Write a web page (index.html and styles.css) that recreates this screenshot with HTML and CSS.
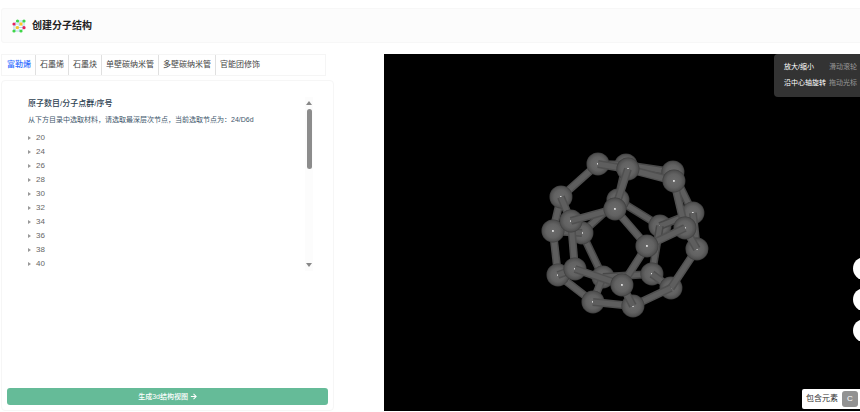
FILE: index.html
```html
<!DOCTYPE html>
<html lang="zh-CN">
<head>
<meta charset="utf-8">
<title>创建分子结构</title>
<link rel="stylesheet" href="styles.css">
</head>
<body>
<header class="header">
  <svg class="logo" viewBox="0 0 14 14" aria-hidden="true">
    <path d="M5 2H12M5 2L2 5L5 8.500L9 5L12 2V8.500L9 5H2M5 2L9 5M2 5V12H9L12 8.500H5L2 12M5 8.500L9 12" fill="none" stroke="#9ccbe8" stroke-width=".8"/>
    <g fill="#3fd648"><circle cx="5.500" cy="2" r="1.600"/><circle cx="12" cy="2" r="1.600"/><circle cx="2" cy="12" r="1.600"/><circle cx="9" cy="12" r="1.600"/></g>
    <g fill="#e6215c"><circle cx="2" cy="5" r="1.600"/><circle cx="12" cy="8.700" r="1.600"/></g>
    <g fill="#f8c82c"><circle cx="9" cy="5" r="1.700"/><circle cx="5.300" cy="8.600" r="1.700"/></g>
  </svg>
  <h1 class="title">创建分子结构</h1>
</header>
<main class="main">
  <section class="side">
    <nav class="tabs">
      <button class="tab tab-active" type="button">富勒烯</button>
      <button class="tab" type="button">石墨烯</button>
      <button class="tab" type="button">石墨炔</button>
      <button class="tab" type="button">单壁碳纳米管</button>
      <button class="tab" type="button">多壁碳纳米管</button>
      <button class="tab" type="button">官能团修饰</button>
    </nav>
    <div class="card">
      <div class="picker">
        <div class="picker-body">
          <h2 class="subtitle">原子数目/分子点群/序号</h2>
          <p class="hint">从下方目录中选取材料，请选取最深层次节点，当前选取节点为：24/D6d</p>
          <ul class="tree">
            <li>20</li><li>24</li><li>26</li><li>28</li><li>30</li>
            <li>32</li><li>34</li><li>36</li><li>38</li><li>40</li>
          </ul>
        </div>
        <div class="scrollbar" aria-hidden="true">
          <span class="arrow arrow-up"></span>
          <span class="thumb"></span>
          <span class="arrow arrow-down"></span>
        </div>
      </div>
      <button class="generate" type="button">生成3d结构视图
        <svg class="go" viewBox="0 0 8 8" aria-hidden="true"><path d="M1 4H7M4 1L7 4L4 7" fill="none" stroke="currentColor" stroke-width="1.200"/></svg>
      </button>
    </div>
  </section>
  <section class="viewer">
    <svg class="molecule" viewBox="384 54 476 357" role="img" aria-label="C24 分子模型">
      <defs>
        <radialGradient id="ball">
          <stop offset="0" stop-color="#6b6b6b"/>
          <stop offset=".6" stop-color="#626262"/>
          <stop offset=".88" stop-color="#515151"/>
          <stop offset="1" stop-color="#3c3c3c"/>
        </radialGradient>
        <g id="atom"><circle r="11.500" fill="url(#ball)"/><circle r=".9" fill="#fff"/></g>
      </defs>
      <g id="scene"></g>
    </svg>
    <dl class="help">
      <dt>放大/缩小</dt><dd>滑动滚轮</dd>
      <dt>沿中心轴旋转</dt><dd>拖动光标</dd>
    </dl>
    <div class="tools">
      <button class="tool" type="button" aria-label="放大"></button>
      <button class="tool" type="button" aria-label="缩小"></button>
      <button class="tool" type="button" aria-label="重置"></button>
    </div>
    <div class="elements">包含元素<span class="element">C</span></div>
  </section>
</main>
<script src="molecule.js"></script>
</body>
</html>
```
FILE: styles.css
```css
* { box-sizing: border-box; }
body {
  margin: 0;
  min-height: 100vh;
  padding: 8px 0 0 1px;
  display: flex;
  flex-direction: column;
  gap: 11px;
  background: #fff;
  color: #333;
  font: 8px/12px "Liberation Sans", "Noto Sans CJK SC", sans-serif;
}
h1, h2, p, ul, dl, dd { margin: 0; padding: 0; }
button { font: inherit; border: 0; margin: 0; padding: 0; }

.header {
  display: flex;
  align-items: center;
  gap: 6px;
  height: 35px;
  padding: 0 10px;
  background: #fcfcfc;
  border: 1px solid #f7f7f7;
  border-right: 0;
  border-radius: 3px 0 0 3px;
}
.logo { width: 14px; height: 14px; }
.title { font-size: 10px; line-height: 14px; font-weight: 700; color: #222; }

.main {
  flex: 1;
  display: grid;
  grid-template-columns: 7fr 10fr;
  gap: 50px;
}
.side { display: flex; flex-direction: column; gap: 4px; padding-bottom: 1px; }
.tabs {
  display: flex;
  height: 22px;
  margin-right: 8px;
  padding-left: 1px;
  border: 1px solid #f5f5f5;
}
.tab {
  padding: 0 4px;
  background: none;
  color: #444;
  border-right: 1px solid #e0e0e0;
  white-space: nowrap;
}
.tab:last-child { border-right: 0; }
.tab-active { color: #3370ff; font-weight: 500; }

.card {
  flex: 1;
  display: flex;
  flex-direction: column;
  justify-content: space-between;
  padding: 16px 5px 5px;
  border: 1px solid #f6f6f6;
  border-radius: 4px;
}
.picker { display: flex; justify-content: space-between; padding: 0 15px 0 21px; }
.picker-body { padding-top: 1px; white-space: nowrap; }
.subtitle { font-size: 8px; line-height: 12px; font-weight: 500; color: #2c3e50; }
.hint { font-size: 7px; line-height: 12px; margin-top: 4px; color: #40566b; }
.tree { list-style: none; margin-top: 5px; color: #666; font-size: 8px; line-height: 14px; }
.tree li { display: flex; align-items: center; gap: 5px; }
.tree li::before {
  content: "";
  border: 2px solid transparent;
  border-left: 3px solid #999;
  border-right: 0;
}
.scrollbar {
  display: flex;
  flex-direction: column;
  align-items: center;
  gap: 4px;
  width: 8px;
  padding: 4px 0;
  background: #fcfcfc;
}
.arrow { border: 3px solid transparent; }
.arrow-up { border-top: 0; border-bottom: 4px solid #888; }
.arrow-down { border-bottom: 0; border-top: 4px solid #888; margin-top: auto; }
.thumb { width: 5px; height: 60px; border-radius: 3px; background: #8c8c8c; }

.generate {
  display: flex;
  align-items: center;
  justify-content: center;
  gap: 2px;
  height: 17px;
  font-size: 7px;
  font-weight: 500;
  color: #fff;
  background: #65bb98;
  border-radius: 3px;
}
.go { width: 7px; height: 7px; }

.viewer { position: relative; overflow: hidden; background: #000; margin-bottom: 1px; }
.molecule { display: block; width: 100%; }
.help {
  position: absolute;
  top: 0;
  right: 0;
  display: grid;
  grid-template-columns: auto auto;
  gap: 4px 3px;
  padding: 7px 3px 8px 10px;
  background: #333;
  border-radius: 4px 0 0 4px;
  font-size: 7px;
  white-space: nowrap;
  color: #fff;
}
.help dd { color: #999; }
.tools {
  position: absolute;
  right: -16px;
  top: 203px;
  display: flex;
  flex-direction: column;
  gap: 8px;
}
.tool { width: 23px; height: 23px; border-radius: 50%; background: #fff; }
.elements {
  position: absolute;
  right: 0;
  bottom: 2px;
  display: flex;
  align-items: center;
  gap: 4px;
  padding: 2px 2px 2px 4px;
  background: #fff;
  border-radius: 2px 0 0 2px;
}
.element {
  width: 16px;
  line-height: 16px;
  text-align: center;
  color: #fff;
  background: #929292;
  border-radius: 3px;
}
```
FILE: molecule.js
```js
// Atoms as [x, y, depth]; depth 0 is the back layer.
const atoms = {
  A: [598, 164, 2], B: [626, 165, 0], C: [628, 169, 4], D: [673, 172, 0],
  E: [674, 181, 4], F: [561, 197, 2], G: [618, 200, 0], H: [615, 209, 5],
  I: [571, 221, 4], J: [553, 231, 2], K: [582, 233, 0], L: [660, 226, 0],
  M: [693, 213, 1], N: [685, 228, 4], O: [647, 246, 5], P: [697, 249, 3],
  Q: [558, 275, 2], R: [575, 269, 4], S: [603, 277, 0], T: [652, 274, 1],
  U: [622, 285, 5], V: [593, 302, 2], W: [633, 306, 3], X: [671, 288, 2]
};
const bonds = ("AF AB AC BD BG CE CH DE DM EN FI FJ IH IR JK JQ KS KG GL HO LM LT " +
  "MP NO NP TS TX XP XW SV VQ VW WU UR UO QR").split(" ");

const items = [];
for (const [a, b] of bonds) {
  const [x1, y1, z1] = atoms[a];
  const [x2, y2, z2] = atoms[b];
  const tone = z1 + z2 < 2 ? "#484848" : "#505050";
  items.push([(z1 + z2) / 2,
    `<path d="M${x1} ${y1}L${x2} ${y2}" stroke="${tone}" stroke-width="8"/>` +
    `<path d="M${x1} ${y1}L${x2} ${y2}" stroke="#5e5e5e" stroke-width="5"/>`]);
}
for (const [x, y, z] of Object.values(atoms)) {
  items.push([z, `<use href="#atom" x="${x}" y="${y}"/>`]);
}
items.sort((p, q) => p[0] - q[0]);
document.getElementById("scene").innerHTML = items.map(item => item[1]).join("");
```
